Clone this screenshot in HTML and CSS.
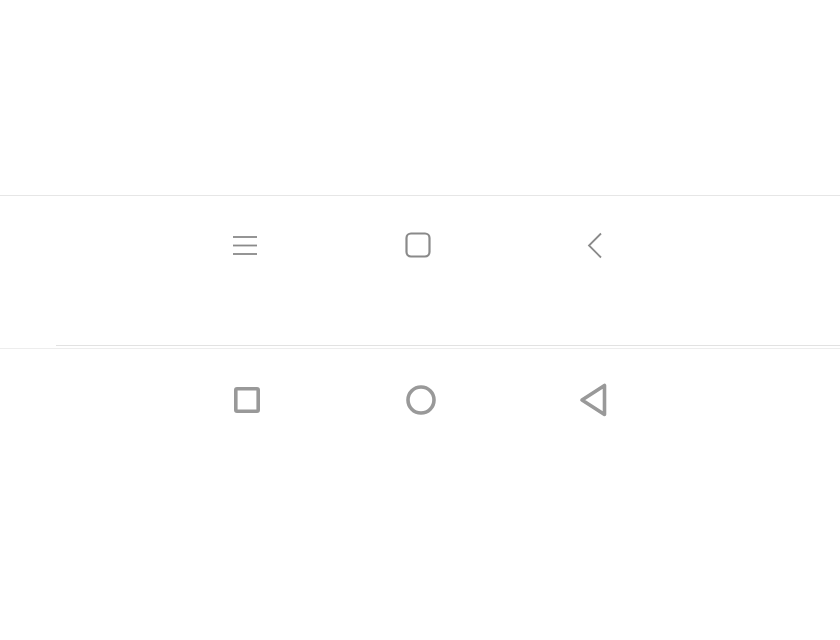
FILE: index.html
```html
<!DOCTYPE html>
<html>
<head>
<meta charset="utf-8">
<link rel="stylesheet" href="styles.css">
</head>
<body>
<div class="page">
  <div class="top-space"></div>
  <nav class="navbar navbar-miui">
    <div class="cell">
      <svg width="26" height="20" viewBox="0 0 26 20"><g stroke="#8a8a8a" stroke-width="1.8" fill="none"><line x1="1" y1="2" x2="25" y2="2"/><line x1="1" y1="10.5" x2="25" y2="10.5"/><line x1="1" y1="19" x2="25" y2="19"/></g></svg>
    </div>
    <div class="cell">
      <svg width="26" height="26" viewBox="0 0 26 26"><rect x="1.5" y="1.5" width="23" height="23" rx="4.5" stroke="#8a8a8a" stroke-width="2.2" fill="none"/></svg>
    </div>
    <div class="cell">
      <svg width="18" height="27" viewBox="0 0 18 27"><polyline points="15,1.5 3,13.5 15,25.5" stroke="#8a8a8a" stroke-width="1.8" fill="none" stroke-linejoin="miter"/></svg>
    </div>
  </nav>
  <div class="divider-inset"></div>
  <nav class="navbar navbar-aosp">
    <div class="cell">
      <svg width="28" height="28" viewBox="0 0 28 28"><rect x="2.8" y="2.8" width="22.4" height="22.4" rx="1.2" stroke="#999999" stroke-width="3.6" fill="none"/></svg>
    </div>
    <div class="cell">
      <svg width="32" height="32" viewBox="0 0 32 32"><circle cx="16" cy="16" r="13" stroke="#999999" stroke-width="3.6" fill="none"/></svg>
    </div>
    <div class="cell">
      <svg width="30" height="34" viewBox="0 0 30 34"><polygon points="25.5,2.5 25.5,31.5 3,17" stroke="#999999" stroke-width="3.6" fill="none" stroke-linejoin="round"/></svg>
    </div>
  </nav>
</div>
</body>
</html>
```
FILE: styles.css
```css
html, body {
  margin: 0;
  padding: 0;
  background: #ffffff;
  font-family: "Roboto", sans-serif;
}
.page {
  width: 840px;
  height: 640px;
  overflow: hidden;
}
.top-space {
  height: 195px;
}
.navbar {
  display: grid;
  justify-content: start;
  align-items: start;
  box-sizing: border-box;
}
.cell {
  display: flex;
  justify-content: center;
  align-items: center;
}
.navbar-miui {
  border-top: 1px solid #e6e6e6;
  height: 150px;
  padding-top: 36px;
  padding-left: 158px;
  grid-template-columns: 174px 172px 182px;
}
.navbar-miui .cell {
  height: 26px;
}
.divider-inset {
  margin-left: 56px;
  border-top: 1px solid #e2e2e2;
  height: 2px;
}
.navbar-aosp {
  border-top: 1px solid #ededed;
  padding-top: 34px;
  padding-left: 160px;
  height: 100px;
  grid-template-columns: 174px 174px 171px;
}
.navbar-aosp .cell {
  height: 34px;
}
```
